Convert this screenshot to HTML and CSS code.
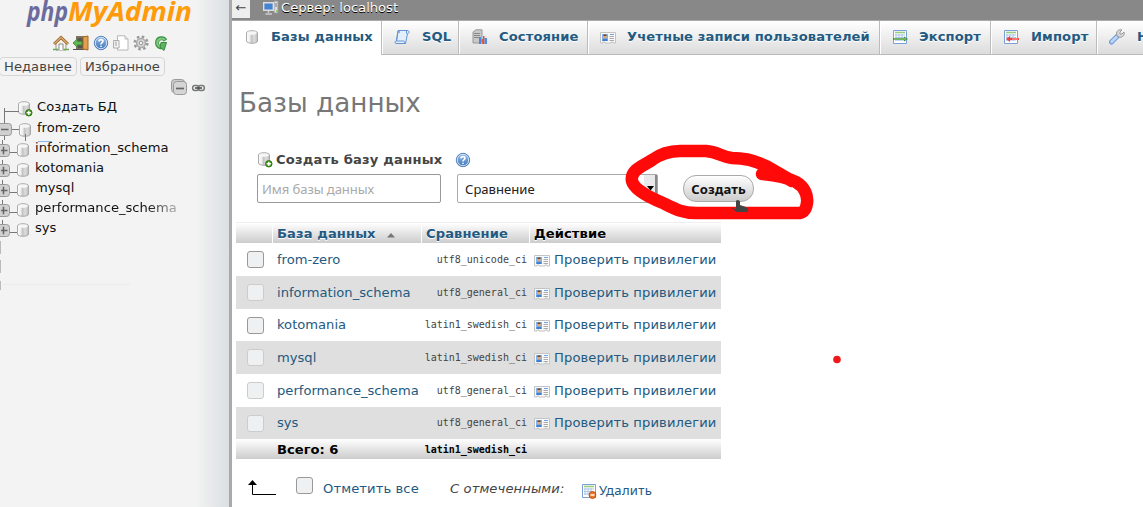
FILE: index.html
```html
<!DOCTYPE html>
<html lang="ru">
<head>
<meta charset="utf-8">
<title>phpMyAdmin</title>
<link rel="stylesheet" href="styles.css">
</head>
<body>
<svg class="defs" aria-hidden="true">
  <defs>
    <linearGradient id="cyl"><stop offset="0" stop-color="#fff"/><stop offset=".3" stop-color="#eee"/><stop offset=".45" stop-color="#c4c4c4"/><stop offset=".7" stop-color="#ddd"/><stop offset="1" stop-color="#bbb"/></linearGradient>
    <linearGradient id="blue" x2="0" y2="1"><stop offset="0" stop-color="#9dc0ea"/><stop offset="1" stop-color="#3b72b8"/></linearGradient>
    <symbol id="db" viewBox="0 0 16 16"><path d="M2.500 4C2.500 1 13.500 1 13.500 4V12C13.500 15 2.500 15 2.500 12Z" fill="url(#cyl)" stroke="#aaa"/><ellipse cx="8" cy="4" rx="4.800" ry="1.800" fill="#f6f6f6"/></symbol>
    <symbol id="dbadd" viewBox="0 0 16 16"><use href="#db" x="-1" y="-1" width="16" height="16"/><circle cx="11.800" cy="11.800" r="3.200" fill="#4b9b24" stroke="#28720c"/><path d="M11.800 9.700V13.900M9.700 11.800H13.900" stroke="#fff" stroke-width="1.400"/></symbol>
    <symbol id="help" viewBox="0 0 16 16"><circle cx="8" cy="8" r="6.700" fill="url(#blue)" stroke="#5280ba"/><circle cx="8" cy="8" r="5.700" fill="none" stroke="#cfe1f6"/><path d="M6 6.500C6 4 10 4 10 6.300C10 7.700 8 7.600 8 9.500M8 10.700V12" fill="none" stroke="#fff" stroke-width="1.600"/></symbol>
    <symbol id="card" viewBox="0 0 16 12"><path d="M.5 .5H15.500V11H13V10H11V11H5V10H3V11H.5Z" fill="#fafafa" stroke="#c3c3c3"/><path d="M2 2H8V9H2Z" fill="#7db4f4"/><path d="M2.500 9V7.500L4 6.500H6L7.500 7.500V9Z" fill="#3d7fd0"/><path d="M3.500 3H6.500V6.500H3.500Z" fill="#e3a675"/><path d="M3.500 2.500H6.500V4H3.500Z" fill="#74451f"/><path d="M10 2.500H14" stroke="#6ba4eb"/><path d="M9.500 4.500H14M9.500 6.500H14M9.500 8.500H14" stroke="#aaa"/></symbol>
    <symbol id="sheet" viewBox="0 0 16 16"><path d="M1.500 1.500H14.500V14.500H1.500Z" fill="#fff" stroke="#7ba0d8"/><path d="M3 3.500H13" stroke="#98cd7e" stroke-width="1.600"/><path d="M3 6H13M3 8.500H13M3 11H13M4 5V12M7 5V12M10 5V12" stroke="#abc4e8"/></symbol>
  </defs>
</svg>
<div class="app">
  <aside class="side">
    <div class="logo"><svg width="180" height="32" viewBox="0 0 180 32"><text class="logo-php" x="1" y="21" textLength="41" lengthAdjust="spacingAndGlyphs">php</text><text class="logo-adm" x="42" y="21" textLength="124" lengthAdjust="spacingAndGlyphs">MyAdmin</text></svg></div>
    <div class="tools">
      <svg viewBox="0 0 16 16"><path d="M3 8V15H13V8L8 4Z" fill="#f5f1e3" stroke="#999"/><path d="M1 9L8 2.500L15 9" fill="none" stroke="#9b632c" stroke-width="3"/><path d="M1 9L8 2.500L15 9" fill="none" stroke="#d9a86b" stroke-width="1.500"/><path d="M6 15V9H10V15" fill="#fff" stroke="#888"/><path d="M0 14.500H5M11 14.500H16" stroke="#6aad4c" stroke-width="1.500"/></svg>
      <svg viewBox="0 0 16 16"><path d="M3 1H15V15H3Z" fill="#817160"/><path d="M5 3H10V13H5Z" fill="#555"/><path d="M10 2L15 1V15L10 14Z" fill="#e2a04c" stroke="#a56b25"/><path d="M0 8L4.500 3.700V6.300H9V10H4.500V12.500Z" fill="#65b655" stroke="#34872c" stroke-width=".8"/><path d="M0 14.500H10" stroke="#555"/></svg>
      <svg><use href="#help"/></svg>
      <svg viewBox="0 0 16 16"><path d="M4.500 .8H12L15 4V15H4.500Z" fill="#fff" stroke="#b7b7b7"/><path d="M12 1V4H15" fill="#eee" stroke="#bbb"/><path d="M.6 5.500H6V13H.6Z" fill="#f6f6f6" stroke="#aaa"/><path d="M3 6.500V11" stroke="#999"/></svg>
      <svg viewBox="0 0 16 16"><circle cx="8" cy="8" r="6.300" fill="none" stroke="#999" stroke-width="2.500" stroke-dasharray="2.500 2.450"/><circle cx="8" cy="8" r="4.400" fill="#d8d8d8" stroke="#aaa" stroke-width="1.500"/><circle cx="8" cy="8" r="1.800" fill="#f2f2f2" stroke="#999"/></svg>
      <svg viewBox="0 0 16 16"><path d="M12.500 5.500C10.500 1.800 4 2.500 4 8C4 11.500 7 12.500 9 12" fill="none" stroke="#3b9440" stroke-width="4"/><path d="M12 5C10 2.500 4.200 3 4.200 8C4.200 11.200 7 12 9 11.500" fill="none" stroke="#82c984" stroke-width="2"/><path d="M8 7.500H13.500L11 15.500L7 12Z" fill="#60b265" stroke="#388d3d"/></svg>
    </div>
    <div class="quick"><span class="q1">Недавнее</span><span class="q2">Избранное</span></div>
    <div class="treectl"><svg width="36" height="18"><rect x=".5" y=".5" width="13" height="13" rx="3" fill="#ccc" stroke="#999"/><rect x="2.500" y="2.500" width="13" height="13" rx="3" fill="#d5d5d5" stroke="#999"/><path d="M5 9.500H13" stroke="#666" stroke-width="1.700"/><rect x="21.700" y="6.500" width="6" height="5" rx="2.200" fill="none" stroke="#777" stroke-width="1.500"/><rect x="27.300" y="6.500" width="6" height="5" rx="2.200" fill="none" stroke="#777" stroke-width="1.500"/><path d="M24 9H31" stroke="#444" stroke-width="1.500"/></svg></div>
    <ul class="tree">
      <li class="t0"><svg class="branch" viewBox="0 0 36 20"><path d="M4.500 9V22M4 12.500H19" fill="none" stroke="#777"/></svg><svg class="i"><use href="#dbadd"/></svg><span>Создать БД</span></li>
      <li class="t1"><svg class="branch" viewBox="0 0 36 20"><path d="M4.500 1V21M12 10.500H19M25.500 15V22" stroke="#777"/><rect x="-3" y="4.500" width="14.500" height="12" rx="3" fill="#d0d0d0" stroke="#999"/><path d="M1 10.500H8.500" stroke="#666" stroke-width="1.500"/><path d="M38 22.500H52" stroke="#8ab4e8"/><path d="M59 23.500H61M65 23.500H67" stroke="#777"/></svg><svg class="i"><use href="#db"/></svg><span>from-zero</span></li>
      <li><svg class="branch" viewBox="0 0 36 20"><use href="#plus"/></svg><svg class="i"><use href="#db"/></svg><span>information_schema</span></li>
      <li><svg class="branch" viewBox="0 0 36 20"><use href="#plus"/></svg><svg class="i"><use href="#db"/></svg><span>kotomania</span></li>
      <li><svg class="branch" viewBox="0 0 36 20"><use href="#plus"/></svg><svg class="i"><use href="#db"/></svg><span>mysql</span></li>
      <li><svg class="branch" viewBox="0 0 36 20"><use href="#plus"/></svg><svg class="i"><use href="#db"/></svg><span class="faded">performance_schema</span></li>
      <li><svg class="branch" viewBox="0 0 36 20"><g id="plus"><path d="M2.500 0V5M9 12.500H17" stroke="#777"/><rect x="-3" y="4.500" width="12.500" height="12" rx="3" fill="#d0d0d0" stroke="#999"/><path d="M1 10.500H7.500M3.500 6.800V14.200" stroke="#666" stroke-width="1.500"/></g></svg><svg class="i"><use href="#db"/></svg><span>sys</span></li>
    </ul>
    <svg class="remnant" width="140" height="52"><path d="M.5 3V16M.5 22V35M.5 43V52" stroke="#bbb"/><path d="M3 46.500H130" stroke="#ebebeb"/></svg>
  </aside>
  <div class="split"></div>
  <main class="main">
    <header class="server"><span class="back">←</span><svg width="16" height="16" viewBox="0 0 16 16"><path d="M11 1H15V13H11Z" fill="#ddd" stroke="#999"/><path d="M12 4H14M12 6H14" stroke="#777"/><path d="M.7 2.700H10.300V10.300H.7Z" fill="#4484d4" stroke="#ddd" stroke-width="1.400"/><path d="M5.500 11V13M2.500 14H9" stroke="#ccc" stroke-width="1.500"/><path d="M14 10V12" stroke="#7c4" stroke-width="1.500"/></svg><span class="server-name">Сервер: localhost</span></header>
    <nav class="tabs">
      <a class="tab on"><svg><use href="#db"/></svg><span>Базы данных</span></a>
      <a class="tab wide"><svg viewBox="0 0 16 16"><path d="M4 1.500H14C16 3 15 4.500 13.500 4.500L11.500 14.500H2C.5 14 .5 12 2.500 12Z" fill="#e4effc" stroke="#6493d3"/><path d="M4 1.500C6 2 6 4 4.500 4M4 2L2.500 12H9.500C11 12 10 14 11.500 14.500M12.500 2V4.500" fill="none" stroke="#6493d3"/></svg><span>SQL</span></a>
      <a class="tab wide"><svg viewBox="0 0 16 16"><path d="M2 3L5 .8H11V12L8 14H2Z" fill="#c9c9c9" stroke="#999"/><path d="M3 4.500H9M3 6.500H9M3 8.500H8" stroke="#888"/><path d="M8 8H10V15H8Z" fill="#4487e5"/><path d="M10.500 10H12.500V15H10.500Z" fill="#ef5b30"/><path d="M12 7H13.500V15H12Z" fill="#ef4b3b"/><path d="M13.500 9H16V15H13.500Z" fill="#4b8cde"/></svg><span>Состояние</span></a>
      <a class="tab"><svg><use href="#card" y="3" width="16" height="12"/></svg><span>Учетные записи пользователей</span></a>
      <a class="tab"><svg viewBox="0 0 16 16"><use href="#sheet"/><path d="M1 9H12V7.500L16 10L12 12.500V11H1Z" fill="#45923a"/><path d="M2 10H14" stroke="#a2d38f"/></svg><span>Экспорт</span></a>
      <a class="tab wide"><svg viewBox="0 0 16 16"><use href="#sheet"/><path d="M16 9H7V7L3 10L7 13V11H16Z" fill="#ef4040"/><path d="M9 10H15" stroke="#ffb0a6"/></svg><span>Импорт</span></a>
      <a class="tab wide"><svg viewBox="0 0 16 16"><path d="M2.500 13L8 7.500" stroke="#6f9ddb" stroke-width="5" stroke-linecap="round"/><path d="M2.700 12.700L7.500 8" stroke="#bcd5f6" stroke-width="3" stroke-linecap="round"/><path d="M8 7L7.500 4C8 1 11 0 13 1L11 3V5H13L15 3C16.500 7 12 9 10 8Z" fill="#d8d8d8" stroke="#999"/></svg><span>Настройки</span></a>
    </nav>
    <section class="page">
      <h1>Базы данных</h1>
      <form class="create">
        <div class="legend"><svg><use href="#dbadd"/></svg><b>Создать базу данных</b><svg class="help"><use href="#help"/></svg></div>
        <div class="controls"><div class="field">Имя базы данных</div><div class="select"><span>Сравнение</span><i><svg width="7" height="5"><path d="M0 0H7L3.500 4.500Z"/></svg></i></div><div class="btn">Создать</div></div>
      </form>
      <div class="table">
        <div class="row head"><span></span><span class="lnk">База данных <svg width="8" height="6"><path d="M4 1L8 5.500H0Z" fill="#777"/></svg></span><span class="lnk">Сравнение</span><span>Действие</span></div>
        <div class="row"><i class="cb"></i><a>from-zero</a><code>utf8_unicode_ci</code><a class="act"><svg><use href="#card"/></svg><span>Проверить привилегии</span></a></div>
        <div class="row odd"><i class="cb off"></i><a>information_schema</a><code>utf8_general_ci</code><a class="act"><svg><use href="#card"/></svg><span>Проверить привилегии</span></a></div>
        <div class="row short"><i class="cb"></i><a>kotomania</a><code>latin1_swedish_ci</code><a class="act"><svg><use href="#card"/></svg><span>Проверить привилегии</span></a></div>
        <div class="row odd"><i class="cb off"></i><a>mysql</a><code>latin1_swedish_ci</code><a class="act"><svg><use href="#card"/></svg><span>Проверить привилегии</span></a></div>
        <div class="row"><i class="cb off"></i><a>performance_schema</a><code>utf8_general_ci</code><a class="act"><svg><use href="#card"/></svg><span>Проверить привилегии</span></a></div>
        <div class="row odd short"><i class="cb off"></i><a>sys</a><code>utf8_general_ci</code><a class="act"><svg><use href="#card"/></svg><span>Проверить привилегии</span></a></div>
        <div class="row foot"><span></span><b>Всего: 6</b><code>latin1_swedish_ci</code><span></span></div>
      </div>
      <div class="bulk">
        <svg class="arrow" width="28" height="16"><path d="M4.500 4V14.500H28" fill="none" stroke="#000"/><path d="M4.500 0L9 5H0Z"/></svg>
        <i class="cb"></i><a class="all">Отметить все</a><em>С отмеченными:</em>
        <svg class="drop" viewBox="0 0 16 16"><use href="#sheet"/><circle cx="11.500" cy="12" r="3.400" fill="#ee7a28" stroke="#bf4d12"/><path d="M9.500 12H13.500" stroke="#fff" stroke-width="1.400"/></svg><a class="del">Удалить</a>
      </div>
    </section>
  </main>
</div>
<svg class="marker" width="1143" height="507">
  <path class="ink" d="M762 174C772 175 784 176 796 182C805 187 808 196 807 203C806 210 804 213 797 213H696C682 213 675 209 663 203C648 197 634 189 632 181C630 170 643 166 652 160C663 152 672 151 680 151H706C718 152 722 157 732 158C745 158 754 160 766 166L792 181"/>
  <path d="M736 201C737 199 740 200 740 202V205L746 207L748 209V212H737L731 208L736 209Z" fill="#444"/>
  <circle cx="837" cy="359.500" r="3.800" fill="#f01818"/>
</svg>
</body>
</html>
```
FILE: styles.css
```css
* { box-sizing: border-box; }
body { margin: 0; width: 1143px; height: 507px; overflow: hidden; background: #fff; color: #444; font: 13.12px/20px "DejaVu Sans", sans-serif; }
svg { display: block; flex: none; }
.defs { position: absolute; width: 0; height: 0; }
.app { display: flex; height: 507px; }

.side { width: 229px; flex: none; overflow: hidden; background: linear-gradient(to right, #f3f3f3 195px, #e8eaeb 210px, #dce0e2 229px); }
.split { width: 3px; flex: none; background: #aaa; }
.logo { height: 35px; padding-left: 26px; }
.logo svg { overflow: visible; }
.logo text { font: italic 700 27px/1 "Open Sans", sans-serif; }
.logo .logo-php { fill: #6c6b9e; font-size: 26px; }
.logo .logo-adm { fill: #ff9a09; }
.tools { display: flex; gap: 4px; padding-left: 53px; height: 22px; }
.tools svg { width: 16px; height: 16px; }
.quick { display: flex; gap: 3px; line-height: 17px; }
.quick span { height: 19px; border: 1px solid #d6d6d6; border-radius: 4px; padding-left: 4px; white-space: nowrap; letter-spacing: .04px; }
.q1 { width: 78px; margin-left: -1px; }
.q2 { width: 85px; }
.treectl { height: 21px; padding: 3px 0 0 171px; }
.tree { list-style: none; margin: 0; padding: 0; height: 141px; color: #111; }
.tree li { display: grid; grid-template-columns: 15px 16px 1fr; height: 20px; align-items: center; }
.tree .branch { width: 36px; height: 20px; grid-area: 1 / 1; overflow: visible; transform: translateY(2px); }
.tree .i { width: 16px; height: 16px; grid-area: 1 / 2; margin-top: 4px; }
.tree span { grid-area: 1 / 3; padding-left: 4px; white-space: nowrap; line-height: 20px; }
.tree .faded { background: linear-gradient(to right, #111 80%, #aaa); background-clip: text; color: transparent; width: 145px; }
.tree .t0, .tree .t1 { grid-template-columns: 17px 16px 1fr; }
.tree .t1 { height: 21px; }
.tree .t1 .branch { transform: translateY(1px); }

.main { width: 911px; overflow: hidden; }
.server { display: flex; height: 20px; background: #888; color: #fff; }
.back { width: 18px; height: 18px; background: #eee; color: #444; line-height: 16px; text-align: center; }
.server svg { margin-left: 13px; }
.server-name { margin-left: 2px; line-height: 15px; text-shadow: 0 1px 0 #000; }
.tabs { display: grid; grid-template-columns: 149px 77px 129px 292px 111px 106px 150px; height: 35px; border-top: 1px solid #aaa; }
.tab { display: flex; align-items: center; gap: 11px; padding: 0 0 1px 12px; border-left: 1px solid #bbb; border-bottom: 1px solid #bbb; box-shadow: inset 1px 0 #fff; background: linear-gradient(#fff, #dcdcdc); color: #235a81; font-weight: 700; white-space: nowrap; text-shadow: 0 1px 0 #fff; letter-spacing: .1px; }
.tab.wide { gap: 12px; padding-left: 12px; }
.tab.on { background: #fff; border-color: transparent; border-left: 0; }
.tab svg { width: 16px; height: 16px; }

.page { padding: 30px 0 0 4px; }
h1 { margin: 0 0 0 3px; font-weight: 400; font-size: 26.24px; line-height: 36px; color: #777; }
.create { height: 101px; padding: 29px 0 0 21px; }
.legend { display: flex; height: 20px; line-height: 19px; }
.legend svg { width: 16px; height: 16px; margin: 2px 3px 0 0; }
.legend b { width: 179px; white-space: nowrap; letter-spacing: .19px; }
.legend .help { width: 16px; margin: 2px 0 0; }
.controls { display: flex; margin-top: 4px; }
.field, .select, .btn { font: 13.1px/29px "Noto Sans", sans-serif; white-space: nowrap; }
.field { width: 184px; height: 29px; border: 1px solid #999; border-radius: 2px; color: #aaa; padding-left: 4px; letter-spacing: -.1px; }
.select { display: flex; justify-content: space-between; width: 201px; height: 29px; margin-left: 16px; border: 1px solid #aaa; color: #222; padding-left: 7px; border-radius: 2px; }
.select i { width: 13px; background: #e9e9eb; border-right: 2px solid #888; padding: 11px 0 0 3px; }
.btn { width: 71px; height: 27px; margin: 1px 0 0 25px; border: 1px solid #aaa; border-radius: 13px; background: linear-gradient(#fff, #ccc); color: #111; font-weight: 700; line-height: 26px; text-align: center; letter-spacing: .15px; }

.table { width: 485px; }
.row { display: grid; grid-template-columns: 37px 149px 108px 191px; height: 33px; align-items: center; }
.row.short { height: 32px; }
.row.odd { background: #dfdfdf; }
.row a { padding-left: 4px; }
a { color: #235a81; white-space: nowrap; }
.cb { width: 17px; height: 17px; border: 1px solid #999; border-radius: 3px; background: #eff0f2; }
.row .cb { margin-left: 11px; }
.cb.off { border-color: #ccc; }
code { font: 10px/16px "DejaVu Sans Mono", monospace; color: #444; text-align: right; padding-right: 3px; }
.act { display: flex; align-items: center; gap: 4px; letter-spacing: .1px; }
.act svg { width: 16px; height: 12px; margin-top: 2px; }
.head { grid-template-columns: 36px 149px 108px 192px; height: 21px; color: #000; font-weight: 700; border-top: 1px solid #eee; }
.head span { height: 20px; line-height: 21px; padding-left: 4px; background: linear-gradient(#fff, #ccc); white-space: nowrap; text-shadow: 0 1px 0 #fff; letter-spacing: .08px; }
.head span + span { border-left: 1px solid #fff; padding-left: 4px; }
.head .lnk { color: #235a81; }
.head svg { display: inline-block; margin-left: 7px; vertical-align: 0; }
.foot { height: 20px; background: linear-gradient(#fff, #ccc); color: #000; }
.foot b { padding-left: 4px; line-height: 21px; }
.foot code { font-weight: 700; color: #000; }
.bulk { display: flex; padding: 18px 0 0 12px; }
.arrow { margin-top: 3px; }
.bulk .cb { margin-left: 20px; }
.all { margin: 2px 0 0 10px; width: 127px; letter-spacing: .1px; }
.bulk em { margin-top: 2px; width: 131px; white-space: nowrap; letter-spacing: .1px; }
.drop { width: 16px; height: 16px; margin: 6px 2px 0 0; }
.del { font: 13.1px/20px "Noto Sans", sans-serif; margin-top: 3px; letter-spacing: .3px; }
.marker { position: absolute; left: 0; top: 0; pointer-events: none; }
.ink { fill: none; stroke: #ff0909; stroke-width: 12.5; stroke-linecap: round; stroke-linejoin: round; }
```
